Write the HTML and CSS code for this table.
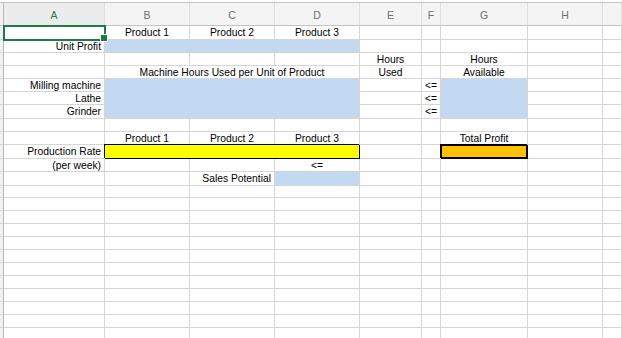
FILE: index.html
```html
<!DOCTYPE html>
<html lang="en">
<head>
    <meta charset="UTF-8">
    <meta name="viewport" content="width=device-width, initial-scale=1.0">
    <title>Production Planning</title>
    <link rel="stylesheet" href="styles.css">
</head>
<body>
    <div class="sheet" id="sheet">
        <!-- column letters -->
        <div class="row head">
            <div class="rh"></div>
            <div class="col selected">A</div>
            <div class="col">B</div>
            <div class="col">C</div>
            <div class="col">D</div>
            <div class="col">E</div>
            <div class="col">F</div>
            <div class="col">G</div>
            <div class="col">H</div>
            <div class="col"></div>
        </div>

        <!-- 1 -->
        <div class="row tall">
            <div class="rh"></div>
            <div class="cell active"></div>
            <div class="cell c">Product 1</div>
            <div class="cell c">Product 2</div>
            <div class="cell c">Product 3</div>
            <div class="cell"></div>
            <div class="cell"></div>
            <div class="cell"></div>
            <div class="cell"></div>
            <div class="cell"></div>
        </div>

        <!-- 2 -->
        <div class="row">
            <div class="rh"></div>
            <div class="cell r">Unit Profit</div>
            <div class="cell span3 blue"></div>
            <div class="cell"></div>
            <div class="cell"></div>
            <div class="cell"></div>
            <div class="cell"></div>
            <div class="cell"></div>
        </div>

        <!-- 3 -->
        <div class="row">
            <div class="rh"></div>
            <div class="cell"></div>
            <div class="cell"></div>
            <div class="cell"></div>
            <div class="cell"></div>
            <div class="cell c">Hours</div>
            <div class="cell"></div>
            <div class="cell c">Hours</div>
            <div class="cell"></div>
            <div class="cell"></div>
        </div>

        <!-- 4 -->
        <div class="row">
            <div class="rh"></div>
            <div class="cell"></div>
            <div class="cell span3 c">Machine Hours Used per Unit of Product</div>
            <div class="cell c">Used</div>
            <div class="cell"></div>
            <div class="cell c">Available</div>
            <div class="cell"></div>
            <div class="cell"></div>
        </div>

        <!-- 5 -->
        <div class="row">
            <div class="rh"></div>
            <div class="cell r">Milling machine</div>
            <div class="cell span3 blue open"></div>
            <div class="cell"></div>
            <div class="cell c">&lt;=</div>
            <div class="cell blue open"></div>
            <div class="cell"></div>
            <div class="cell"></div>
        </div>

        <!-- 6 -->
        <div class="row">
            <div class="rh"></div>
            <div class="cell r">Lathe</div>
            <div class="cell span3 blue open"></div>
            <div class="cell"></div>
            <div class="cell c">&lt;=</div>
            <div class="cell blue open"></div>
            <div class="cell"></div>
            <div class="cell"></div>
        </div>

        <!-- 7 -->
        <div class="row tall">
            <div class="rh"></div>
            <div class="cell r">Grinder</div>
            <div class="cell span3 blue"></div>
            <div class="cell"></div>
            <div class="cell c">&lt;=</div>
            <div class="cell blue"></div>
            <div class="cell"></div>
            <div class="cell"></div>
        </div>

        <!-- 8 -->
        <div class="row">
            <div class="rh"></div>
            <div class="cell"></div>
            <div class="cell"></div>
            <div class="cell"></div>
            <div class="cell"></div>
            <div class="cell"></div>
            <div class="cell"></div>
            <div class="cell"></div>
            <div class="cell"></div>
            <div class="cell"></div>
        </div>

        <!-- 9 -->
        <div class="row">
            <div class="rh"></div>
            <div class="cell"></div>
            <div class="cell c">Product 1</div>
            <div class="cell c">Product 2</div>
            <div class="cell c">Product 3</div>
            <div class="cell"></div>
            <div class="cell"></div>
            <div class="cell c">Total Profit</div>
            <div class="cell"></div>
            <div class="cell"></div>
        </div>

        <!-- 10 -->
        <div class="row tall">
            <div class="rh"></div>
            <div class="cell r">Production Rate</div>
            <div class="cell span3 yellow"></div>
            <div class="cell"></div>
            <div class="cell"></div>
            <div class="cell orange"></div>
            <div class="cell"></div>
            <div class="cell"></div>
        </div>

        <!-- 11 -->
        <div class="row">
            <div class="rh"></div>
            <div class="cell r">(per week)</div>
            <div class="cell"></div>
            <div class="cell"></div>
            <div class="cell c">&lt;=</div>
            <div class="cell"></div>
            <div class="cell"></div>
            <div class="cell"></div>
            <div class="cell"></div>
            <div class="cell"></div>
        </div>

        <!-- 12 -->
        <div class="row tall">
            <div class="rh"></div>
            <div class="cell"></div>
            <div class="cell"></div>
            <div class="cell r">Sales Potential</div>
            <div class="cell blue"></div>
            <div class="cell"></div>
            <div class="cell"></div>
            <div class="cell"></div>
            <div class="cell"></div>
            <div class="cell"></div>
        </div>
    </div>

    <script>
        // empty rows below the model
        const sheet = document.getElementById('sheet');
        for (let i = 0; i < 13; i++) {
            const row = document.createElement('div');
            row.className = i === 0 ? 'row short' : 'row';
            row.innerHTML = '<div class="rh"></div>' + '<div class="cell"></div>'.repeat(9);
            sheet.appendChild(row);
        }
    </script>
</body>
</html>
```

FILE: styles.css
```css
* {
    margin: 0;
    padding: 0;
    box-sizing: border-box;
}

body {
    font-family: 'Liberation Sans', Arial, Helvetica, sans-serif;
    font-size: 10.3px;
    color: #000;
    background: #fff;
    overflow: hidden;
}

.sheet {
    margin-top: 2px;
    border-top: 1px solid #c6c6c6;
}

.row {
    display: grid;
    grid-template-columns: 4px 101px 85px 85px 85px 62px 19px 87px 75px 1fr;
    height: 13px;
}

.row.tall { height: 14px; }
.row.short { height: 12px; }

.row.head {
    height: 23px;
}

/* row number strip on the left edge */
.rh {
    background: #f1f1f1;
    border-right: 1px solid #b9b9b9;
    border-bottom: 1px solid #d4d4d4;
}

.head .rh {
    border-bottom-color: #c4c4c4;
}

.col {
    background: #f4f4f4;
    border-right: 1px solid #dedede;
    border-bottom: 1px solid #c4c4c4;
    color: #6f6f6f;
    font-size: 10.5px;
    display: flex;
    align-items: center;
    justify-content: center;
    padding-top: 1px;
}

.col.selected {
    background: #ececec;
    color: #1e7a47;
}

.cell {
    border-right: 1px solid #d6d6d6;
    border-bottom: 1px solid #d6d6d6;
    padding: 2px 3px 0;
    display: flex;
    align-items: center;
    white-space: nowrap;
    line-height: 1;
}

.c { justify-content: center; }
.r { justify-content: flex-end; }

.span3 { grid-column: span 3; }

.blue {
    background: #c3d8f1;
}

/* fill continues into the row below */
.blue.open {
    border-bottom-color: #c3d8f1;
}

.yellow {
    background: #ffff00;
    border-right-color: #000;
    border-bottom-color: #000;
    box-shadow: -1px -1px 0 #000;
}

.orange {
    background: #ffc000;
    border-right-color: #000;
    border-bottom-color: #000;
    box-shadow: inset 0 0 0 1px #000, -1px -1px 0 #000;
}

/* selected cell A1 */
.active {
    position: relative;
}

.active::before {
    content: '';
    position: absolute;
    top: -1px;
    left: -1px;
    right: -2px;
    bottom: -2px;
    border: 2px solid #1e7a47;
    z-index: 1;
}

.active::after {
    content: '';
    position: absolute;
    right: -4px;
    bottom: -3px;
    width: 6px;
    height: 6px;
    background: #1e7a47;
    border: 1px solid #fff;
    z-index: 2;
}
```
